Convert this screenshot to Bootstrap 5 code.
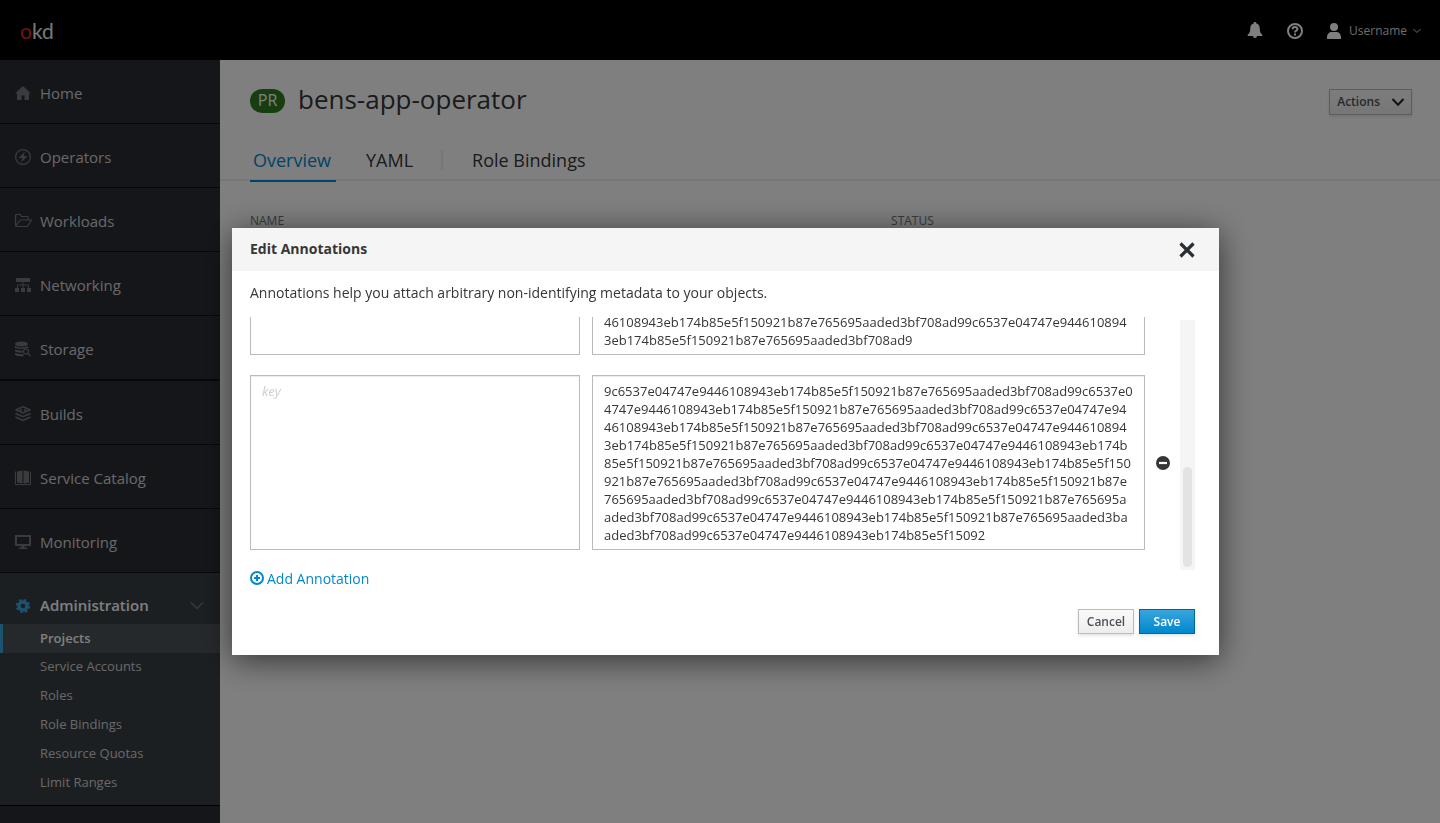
<!DOCTYPE html>
<html lang="en">
<head>
<meta charset="utf-8">
<meta name="viewport" content="width=device-width, initial-scale=1">
<title>bens-app-operator - okd</title>
<link href="https://cdn.jsdelivr.net/npm/bootstrap@5.3.0/dist/css/bootstrap.min.css" rel="stylesheet">
<style>
  body { font-family: "Open Sans", sans-serif; font-size: 14px; line-height: 20px; color: #363636; background: #fff; overflow: hidden; }
  a { text-decoration: none; }
  .masthead { height: 60px; background: #000; padding: 1px 19px 0 20px; }
  .brand-name { font-family: Lato, sans-serif; font-size: 21px; line-height: 24px; color: #f0f0f0; }
  .brand-name:hover { color: #fff; }
  .brand-name span { color: #e0262e; }
  .tool { color: #fff; padding: 0; border: 0; background: none; line-height: 20px; }
  .tool svg { display: block; }
  .user-name { font-size: 12px; color: #d8d8d8; }
  .user-caret { margin-left: 6px; }

  .shell { min-height: calc(100vh - 60px); }
  .side { width: 220px; background: #2b2d34; }
  .side-link { height: 64px; padding: 2px 0 0 15px; border-bottom: 1px solid #101114; color: #d1d1d1; font-size: 15px; }
  .side-link svg, .side-head svg { width: 16px; height: 16px; margin-right: 9px; color: #72767b; }
  .side-link.group-end { height: 65px; border-bottom-width: 2px; }
  .side-open { background: #393f44; border-bottom: 1px solid #050505; padding-bottom: 7px; }
  .side-head { height: 51px; padding: 12px 15px 0; font-size: 15px; font-weight: 600; color: #fff; }
  .side-head .gear { color: #39a5dc; }
  .side-head .chev { margin-right: 0; }
  .sub-link { height: 29px; padding: 0 0 4px 40px; color: #d1d1d1; font-size: 13px; }
  .sub-link.current { background: #4d5258; border-left: 3px solid #39a5dc; padding: 0 0 2px 37px; color: #fff; font-weight: 600; }

  .page-head { padding: 20px 28px 0 30px; }
  .kind { background: #2f7d22; color: #fff; border-radius: 12px; font-size: 16px; line-height: 22px; height: 24px; width: 35px; text-align: center; margin: 4px 13px 0 0; }
  .page-title { font-size: 26px; line-height: 38px; font-weight: 400; margin: 0; }
  .act { font-size: 12px; font-weight: 600; line-height: 18px; border: 1px solid #bbb; border-radius: 0; color: #4d5258; background: linear-gradient(#fafafa, #ededed); padding: 3px 7px; box-shadow: 0 2px 3px rgba(3,3,3,.1); }
  .act-main { border-color: #00659c; color: #fff; background: linear-gradient(#39a5dc, #0088ce); }
  .act:hover { border-color: #8b8d8f; }
  .act-menu { margin-top: 6px; padding: 3px 6px 3px 7px; }
  .act-menu span { margin-right: 11px; }
  .act-foot { width: 56px; height: 25px; padding: 3px 7px 2px; }
  .foot { gap: 5px; }
  .tab-strip { border-bottom: 2px solid #eee; padding-left: 30px; margin-top: 20px; }
  .tab-link { font-size: 18px; line-height: 26px; color: #363636; padding: 9px 5px 7px; margin-bottom: -3px; border-bottom: 2px solid transparent; }
  .tab-link.current { color: #0088ce; border-color: #0088ce; padding-left: 3px; margin-right: 25px; }
  .tab-rule { width: 2px; height: 20px; background: #eee; margin: 3px 24px 0 23px; }
  .meta { padding: 30px 115px 0 30px; font-size: 12px; color: #72767b; }

  .modal { padding-left: 11px; }
  .modal-dialog { max-width: 987px; margin: 228px auto 0; }
  .modal-content { border: 0; border-radius: 0; box-shadow: 0 5px 30px rgba(0,0,0,.6); color: #363636; }
  .modal-header { background: #f5f5f5; border: 0; border-radius: 0; padding: 0 24px 0 18px; height: 43px; }
  .modal-title { font-size: 14px; line-height: 20px; font-weight: 700; padding-bottom: 2px; }
  .modal-body { padding: 12px 24px 21px 18px; }
  .close-x { border: 0; background: none; padding: 0; line-height: 0; color: #292e34; }
  .pairs { height: 253px; margin-top: 14px; overflow: hidden; }
  .pair { display: grid; grid-template-columns: 342fr 553fr 35px; margin-bottom: 20px; }
  .pair textarea { display: block; border: 1px solid #bbb; border-radius: 0; font-size: 13px; line-height: 18px; color: #363636; padding: 6px 10px 5px 11px; resize: none; overflow: hidden; box-shadow: inset 0 1px 1px rgba(3,3,3,.08); word-break: break-all; width: 100%; }
  .pair textarea.field-key { width: calc(100% - 12px); }
  .pair textarea::placeholder { font-style: italic; color: #ccc; }
  .bar-track { width: 15px; height: 250px; background: #f5f5f5; padding: 3px; margin-top: 17px; }
  .bar-thumb { width: 9px; height: 100px; border-radius: 5px; background: #e3e3e3; }
  .add-link { border: 0; background: none; padding: 0; color: #0088ce; font-size: 14px; line-height: 20px; margin-top: -1px; }
  .add-link svg { margin: 0 3px 2px 0; }
</style>
</head>
<body>
<svg class="d-none">
  <symbol id="chev" viewBox="0 0 14 10"><path d="M1.500 2 7 7.700 12.500 2" fill="none" stroke="currentColor" stroke-width="2"/></symbol>
</svg>

<header class="masthead d-flex align-items-center justify-content-between">
  <a class="brand-name" href="#"><span>o</span>kd</a>
  <div class="d-flex align-items-center">
    <button class="tool" type="button" aria-label="Notifications">
      <svg width="16" height="17" viewBox="0 0 16 17" fill="currentColor"><path d="M8 0c1 0 1.500.7 1.500 1.500C12 2.200 12.800 4.500 12.800 7c0 3 .9 4.600 2.500 5.800v1.200H10a2 2 0 0 1-4 0H.7v-1.200C2.300 11.600 3.200 10 3.200 7c0-2.500.8-4.800 3.300-5.500C6.500.7 7 0 8 0z"/></svg>
    </button>
    <button class="tool mx-4" type="button" aria-label="Help">
      <svg width="16" height="16" viewBox="0 0 16 16" fill="none" stroke="currentColor"><circle cx="8" cy="8" r="7" stroke-width="2"/><path d="M5.600 6.200C5.600 3.400 10.400 3.400 10.400 6.200 10.400 7.700 8 7.700 8 9.400" stroke-width="2"/><path d="M8 10.500v2" stroke-width="2"/></svg>
    </button>
    <button class="tool d-flex align-items-center" type="button">
      <svg class="me-2" width="14" height="16" viewBox="0 0 14 16" fill="currentColor"><circle cx="7" cy="4" r="4"/><path d="M0 16v-2c0-3 2-5 4.500-5h5c2.500 0 4.500 2 4.500 5v2z"/></svg>
      <span class="user-name">Username</span>
      <svg width="8" height="6" viewBox="0 0 8 6" class="user-name user-caret"><path d="m.5 1 3.500 3.500L7.500 1" fill="none" stroke="currentColor"/></svg>
    </button>
  </div>
</header>

<div class="shell d-flex">
  <nav class="side flex-shrink-0" aria-label="Main">
    <a class="side-link d-flex align-items-center" href="#"><svg viewBox="0 0 16 16" fill="currentColor"><path d="M8 1 16 8.500H14V15H9.500V10.500h-3V15H2V8.500H0z"/></svg>Home</a>
    <a class="side-link d-flex align-items-center" href="#"><svg viewBox="0 0 16 16"><circle cx="8" cy="8" r="7.400" fill="none" stroke="currentColor" stroke-width="1.200"/><path d="M10 2.500 3.500 9H7.500L6 13.500 12.500 7.200H8.500z" fill="currentColor"/></svg>Operators</a>
    <a class="side-link d-flex align-items-center" href="#"><svg viewBox="0 0 16 16" fill="none" stroke="currentColor" stroke-width="1.200" stroke-linejoin="round" overflow="visible"><path d="M.6 13V2.500q0-1 1-1H5l1.500 2H12q1 0 1 1V7M.6 13 4.500 8q.5-1 1.500-1H16.500L13 12.500q-.5 1-1.500 1h-10q-.9 0-.9-.9"/></svg>Workloads</a>
    <a class="side-link d-flex align-items-center" href="#"><svg viewBox="0 0 16 16" fill="currentColor"><path d="M1 1h14v4H1zM0 11h4v4H0zM6 11h4v4H6zM12 11h4v4h-4z"/><path d="M8 5v6M2.500 11V8h11v3" fill="none" stroke="currentColor"/></svg>Networking</a>
    <a class="side-link group-end d-flex align-items-center" href="#"><svg viewBox="0 0 16 16" fill="currentColor"><ellipse cx="6.500" cy="3" rx="6.500" ry="2.500"/><path d="M0 5q6.500 3 13 0v2Q6.500 9 0 7zM0 8.500q4 1.500 7.500 1v2Q3 12 0 10.500zM0 12q4 1.500 8 1l1 2Q4 16 0 14z"/><circle cx="11" cy="10.500" r="2.500" fill="none" stroke="currentColor" stroke-width="1.200"/><path d="m13 12.500 2.500 2.500" stroke="currentColor" stroke-width="1.300"/></svg>Storage</a>
    <a class="side-link d-flex align-items-center" href="#"><svg viewBox="0 0 16 16" fill="none" stroke="currentColor" stroke-width="1.500"><path d="M8 .8 15 3.800 8 7 1 3.800zM.5 7.500 8 10.800l7.500-3.300M.5 11 8 14.500 15.500 11"/><path d="M5 4h2m2 0h2"/></svg>Builds</a>
    <a class="side-link d-flex align-items-center" href="#"><svg viewBox="0 0 16 16" fill="currentColor"><path d="M2 1.500 7.500.5v13L2 12.500zM8.500.5 14 1.500v11L8.500 13.500z"/><path d="M.5 1.500v13H7l1 .5 1-.5h6.500v-13" fill="none" stroke="currentColor"/></svg>Service Catalog</a>
    <a class="side-link d-flex align-items-center" href="#"><svg viewBox="0 0 16 16"><path d="M1 2h14v9H1z" fill="none" stroke="currentColor" stroke-width="2"/><path d="M6.500 12h3v1.500H12V15H4v-1.500h2.500z" fill="currentColor"/></svg>Monitoring</a>
    <div class="side-open">
      <a class="side-head d-flex align-items-center" href="#" aria-expanded="true">
        <svg class="gear" viewBox="0 0 16 16"><circle cx="8" cy="9" r="4" fill="none" stroke="currentColor" stroke-width="3.400"/><circle cx="8" cy="9" r="6.200" fill="none" stroke="currentColor" stroke-width="1.800" stroke-dasharray="2.600 2.270"/></svg>
        <span class="flex-grow-1">Administration</span>
        <svg class="chev" viewBox="0 0 16 16"><path d="M2 5.500 8 11.500 14 5.500" fill="none" stroke="currentColor" stroke-width="1.300"/></svg>
      </a>
      <a class="sub-link current d-flex align-items-center" href="#">Projects</a>
      <a class="sub-link d-flex align-items-center" href="#">Service Accounts</a>
      <a class="sub-link d-flex align-items-center" href="#">Roles</a>
      <a class="sub-link d-flex align-items-center" href="#">Role Bindings</a>
      <a class="sub-link d-flex align-items-center" href="#">Resource Quotas</a>
      <a class="sub-link d-flex align-items-center" href="#">Limit Ranges</a>
    </div>
  </nav>

  <main class="flex-grow-1">
    <div class="page-head d-flex align-items-center">
      <span class="kind">PR</span>
      <h1 class="page-title flex-grow-1">bens-app-operator</h1>
      <button class="act act-menu d-flex align-items-center" type="button"><span>Actions</span><svg width="14" height="10" class="text-dark"><use href="#chev"/></svg></button>
    </div>
    <nav class="tab-strip d-flex align-items-center" aria-label="Project">
      <a class="tab-link current" href="#">Overview</a>
      <a class="tab-link" href="#">YAML</a>
      <span class="tab-rule"></span>
      <a class="tab-link" href="#">Role Bindings</a>
    </nav>
    <div class="meta">
      <div class="row">
        <div class="col-7">NAME</div>
        <div class="col-5">STATUS</div>
      </div>
    </div>
  </main>
</div>

<div class="modal-backdrop show"></div>
<div class="modal show d-block" tabindex="-1" role="dialog" aria-labelledby="dlg-title">
  <div class="modal-dialog">
    <div class="modal-content">
      <div class="modal-header">
        <h2 class="modal-title" id="dlg-title">Edit Annotations</h2>
        <button class="close-x" type="button" aria-label="Close"><svg width="16" height="16" viewBox="0 0 16 16"><path d="m1.500 1.500 13 13m0-13-13 13" stroke="currentColor" stroke-width="3.200"/></svg></button>
      </div>
      <div class="modal-body">
        <p class="mb-0">Annotations help you attach arbitrary non-identifying metadata to your objects.</p>
        <div class="d-flex">
          <div class="pairs flex-grow-1 d-flex flex-column justify-content-end">
            <div class="pair align-items-center">
              <textarea class="field-key" rows="3" aria-label="Key 1"></textarea>
              <textarea rows="3" aria-label="Value 1">4747e9446108943eb174b85e5f150921b87e765695aaded3bf708ad99c6537e04747e94
46108943eb174b85e5f150921b87e765695aaded3bf708ad99c6537e04747e944610894
3eb174b85e5f150921b87e765695aaded3bf708ad9</textarea>
            </div>
            <div class="pair align-items-center">
              <textarea class="field-key" rows="9" placeholder="key" aria-label="Key 2"></textarea>
              <textarea rows="9" aria-label="Value 2">9c6537e04747e9446108943eb174b85e5f150921b87e765695aaded3bf708ad99c6537e0
4747e9446108943eb174b85e5f150921b87e765695aaded3bf708ad99c6537e04747e94
46108943eb174b85e5f150921b87e765695aaded3bf708ad99c6537e04747e944610894
3eb174b85e5f150921b87e765695aaded3bf708ad99c6537e04747e9446108943eb174b
85e5f150921b87e765695aaded3bf708ad99c6537e04747e9446108943eb174b85e5f150
921b87e765695aaded3bf708ad99c6537e04747e9446108943eb174b85e5f150921b87e
765695aaded3bf708ad99c6537e04747e9446108943eb174b85e5f150921b87e765695a
aded3bf708ad99c6537e04747e9446108943eb174b85e5f150921b87e765695aaded3ba
aded3bf708ad99c6537e04747e9446108943eb174b85e5f15092</textarea>
              <button class="close-x" type="button" aria-label="Remove annotation"><svg width="14" height="14" viewBox="0 0 14 14"><circle cx="7" cy="7" r="7" fill="#363636"/><path d="M3 7h8" stroke="#fff" stroke-width="2.200"/></svg></button>
            </div>
          </div>
          <div class="bar-track d-flex align-items-end" aria-hidden="true"><div class="bar-thumb"></div></div>
        </div>
        <button class="add-link d-flex align-items-center" type="button"><svg width="14" height="14" viewBox="0 0 14 14" fill="none" stroke="currentColor" stroke-width="2"><circle cx="7" cy="7" r="6"/><path d="M7 4v6M4 7h6"/></svg>Add Annotation</button>
        <div class="foot d-flex justify-content-end mt-3 pt-1">
          <button class="act act-foot" type="button">Cancel</button>
          <button class="act act-main act-foot" type="button">Save</button>
        </div>
      </div>
    </div>
  </div>
</div>
<script src="https://cdn.jsdelivr.net/npm/bootstrap@5.3.0/dist/js/bootstrap.bundle.min.js"></script>
</body>
</html>
